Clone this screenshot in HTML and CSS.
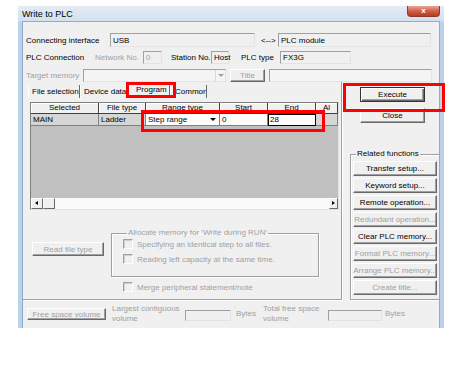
FILE: index.html
```html
<!DOCTYPE html>
<html lang="en">
<head>
    <meta charset="UTF-8">
    <title>Write to PLC</title>
    <link rel="stylesheet" href="styles.css">
</head>
<body>

<div class="window">
    <div class="titlebar">
        <span class="title">Write to PLC</span>
        <span class="close-x">x</span>
    </div>
    <div class="client">
        <div class="row row1">
            <span class="lbl lbl-conn">Connecting interface</span>
            <span class="field f-usb">USB</span>
            <span class="lbl lbl-arrow">&lt;--&gt;</span>
            <span class="field f-module">PLC module</span>
        </div>
        <div class="row row2">
            <span class="lbl lbl-plcconn">PLC Connection</span>
            <span class="lbl dis lbl-net">Network No.</span>
            <span class="field dis f-net">0</span>
            <span class="lbl lbl-station">Station No.</span>
            <span class="field f-host">Host</span>
            <span class="lbl lbl-type">PLC type</span>
            <span class="field f-type">FX3G</span>
        </div>
        <div class="row row3">
            <span class="lbl dis lbl-target">Target memory</span>
            <span class="field combo f-target"><span class="drop dis-drop"></span></span>
            <span class="btn dis btn-title">Title</span>
            <span class="field f-titlebox"></span>
        </div>

        <div class="main">
            <div class="tabpanel">
                <div class="tabs">
                    <span class="tab t-file">File selection</span>
                    <span class="tab t-device">Device data</span>
                    <span class="tab active t-program">Program</span>
                    <span class="tab t-common">Common</span>
                </div>

                <div class="grid">
                    <div class="grid-head">
                        <span>Selected</span>
                        <span>File type</span>
                        <span>Range type</span>
                        <span>Start</span>
                        <span>End</span>
                        <span>Al</span>
                    </div>
                    <div class="grid-row">
                        <span class="cell">MAIN</span>
                        <span class="cell">Ladder</span>
                        <span class="cell edit">Step range<span class="mini-drop"></span></span>
                        <span class="cell edit">0</span>
                        <span class="cell edit focused">28</span>
                        <span class="cell"></span>
                    </div>
                    <div class="grid-body"></div>
                    <div class="hscroll">
                        <span class="sb-btn sb-left"></span>
                        <span class="sb-btn sb-thumb"></span>
                        <span class="sb-track"></span>
                        <span class="sb-btn sb-right"></span>
                    </div>
                </div>

                <div class="lower">
                    <span class="btn dis btn-read">Read file type</span>
                    <fieldset class="group alloc">
                        <legend>Allocate memory for 'Write during RUN'</legend>
                        <label class="check dis"><span class="box"></span>Specifying an identical step to all files.</label>
                        <label class="check dis"><span class="box"></span>Reading left capacity at the same time.</label>
                    </fieldset>
                </div>
                <label class="check dis merge"><span class="box"></span>Merge peripheral statement/note</label>
            </div>

            <div class="side">
                <span class="btn default btn-exec">Execute</span>
                <span class="btn btn-close">Close</span>
                <fieldset class="group related">
                    <legend>Related functions</legend>
                    <span class="btn fn">Transfer setup...</span>
                    <span class="btn fn">Keyword setup...</span>
                    <span class="btn fn">Remote operation...</span>
                    <span class="btn fn dis">Redundant operation...</span>
                    <span class="btn fn">Clear PLC memory...</span>
                    <span class="btn fn dis">Format PLC memory...</span>
                    <span class="btn fn dis">Arrange PLC memory...</span>
                    <span class="btn fn dis">Create title...</span>
                </fieldset>
            </div>
        </div>

        <div class="footer">
            <span class="btn dis btn-free">Free space volume</span>
            <span class="lbl dis lbl-largest">Largest contiguous<br>volume</span>
            <span class="field f-largest"></span>
            <span class="lbl dis lbl-bytes">Bytes</span>
            <span class="lbl dis lbl-total">Total free space<br>volume</span>
            <span class="field f-total"></span>
            <span class="lbl dis">Bytes</span>
        </div>
    </div>
</div>

<!-- red annotation boxes drawn over the dialog -->
<div class="mark mark-tab"></div>
<div class="mark mark-range"></div>
<div class="mark mark-exec"></div>

</body>
</html>
```

FILE: styles.css
```css
* {
    box-sizing: border-box;
}

body {
    margin: 0;
    background-color: #ffffff;
    font-family: 'Liberation Sans', Arial, sans-serif;
    font-size: 8px;
    color: #000;
    position: relative;
}

.window {
    width: 426px;
    height: 322px;
    margin: 6px 0 0 18px;
    display: flex;
    flex-direction: column;
    background: linear-gradient(#e4ecf6, #d2e0f0 15px, #bad2ec 16px, #bad2ec);
}

.titlebar {
    height: 15px;
    display: flex;
    align-items: flex-start;
    padding-left: 4px;
}

.title {
    font-size: 9px;
    line-height: 16px;
}

.close-x {
    margin-left: auto;
    margin-right: 4px;
    width: 33px;
    height: 11px;
    line-height: 10px;
    text-align: center;
    color: #fff;
    font-weight: bold;
    font-size: 8px;
    border: 1px solid #8d3a2e;
    border-top: 0;
    border-radius: 0 0 4px 4px;
    background: linear-gradient(#e9a89a, #d0604a 50%, #b93a22);
}

.client {
    flex: 1;
    margin: 0 4px;
    background-color: #f0f0f0;
    border: 1px solid #92abc7;
    border-bottom: 0;
    overflow: hidden;
}

/* top rows */
.row {
    display: flex;
    align-items: center;
    padding-left: 3px;
    white-space: nowrap;
}

.row1 {
    height: 14px;
    margin-top: 11px;
}

.row2 {
    height: 13px;
    margin-top: 4px;
}

.row3 {
    height: 13px;
    margin-top: 5px;
}

.lbl {
    flex-shrink: 0;
}

.dis {
    color: #a0a0a0;
}

.lbl-conn { width: 84px; }
.lbl-arrow { width: 17px; margin-left: 6px; }
.lbl-plcconn { width: 69px; }
.lbl-net { width: 48px; }
.lbl-station { width: 40px; margin-left: 9px; }
.lbl-type { width: 39px; margin-left: 12px; }
.lbl-target { width: 57px; }

.field {
    height: 100%;
    flex-shrink: 0;
    display: flex;
    align-items: center;
    padding-left: 2px;
    background-color: #f0f0f0;
    border: 1px solid;
    border-color: #a0a0a0 #e3e3e3 #e3e3e3 #a0a0a0;
}

.f-usb { width: 145px; }
.f-module { width: 153px; }
.f-net { width: 19px; }
.f-host { width: 18px; }
.f-type { width: 71px; }
.f-target { width: 143px; background-color: #f4f4f4; }
.f-titlebox { width: 163px; margin-left: 4px; background-color: #f4f4f4; }

.combo {
    justify-content: flex-end;
    padding: 0;
}

.drop {
    width: 10px;
    height: 100%;
    border-left: 1px solid #d8d8d8;
    position: relative;
}

.drop::after {
    content: '';
    position: absolute;
    left: 2px;
    top: 4px;
    border: 3px solid transparent;
    border-top: 3px solid #000;
}

.dis-drop::after {
    border-top-color: #a0a0a0;
}

/* buttons */
.btn {
    display: flex;
    align-items: center;
    justify-content: center;
    flex-shrink: 0;
    white-space: nowrap;
    background-color: #f0f0f0;
    border: 1px solid;
    border-color: #ffffff #696969 #696969 #ffffff;
    box-shadow: inset -1px -1px #a0a0a0;
}

.btn-title {
    width: 35px;
    height: 13px;
    margin-left: 4px;
}

.btn.default {
    border-color: #333 #333 #333 #333;
    box-shadow: inset 1px 1px #fff, inset -1px -1px #696969, inset -2px -2px #a0a0a0;
}

/* tab page */
.main {
    display: flex;
    height: 218px;
}

.tabpanel {
    width: 319px;
    flex-shrink: 0;
    border-right: 1px solid #a0a0a0;
    border-bottom: 1px solid #a0a0a0;
    box-shadow: 1px 1px #fff;
}

.tabs {
    display: flex;
    align-items: flex-end;
    height: 15px;
    margin-top: 1px;
    padding-left: 5px;
}

.tab {
    height: 13px;
    line-height: 13px;
    padding-left: 3px;
    border-left: 1px solid #fff;
    border-right: 1px solid #696969;
    white-space: nowrap;
    overflow: hidden;
}

.t-file { width: 52px; }
.t-device { width: 48px; }
.t-program { width: 42px; padding-left: 7px; }
.t-common { width: 37px; padding-left: 4px; }

.tab.active {
    height: 15px;
    line-height: 11px;
    border-top: 1px solid #fff;
}

.grid {
    width: 309px;
    height: 108px;
    margin: 4px 0 0 7px;
    display: flex;
    flex-direction: column;
    border: 1px solid;
    border-color: #808080 #e3e3e3 #e3e3e3 #808080;
    background-color: #c0c0c0;
}

.grid-head,
.grid-row {
    display: grid;
    grid-template-columns: 68px 47px 74px 48px 48px 1fr;
}

.grid-head {
    height: 11px;
}

.grid-head span {
    text-align: center;
    line-height: 10px;
    background-color: #f0f0f0;
    border-right: 1px solid #404040;
    border-bottom: 1px solid #404040;
    box-shadow: inset 1px 1px #fff;
    overflow: hidden;
    white-space: nowrap;
}

.grid-row {
    height: 12px;
}

.cell {
    position: relative;
    padding-left: 2px;
    line-height: 11px;
    background-color: #d6d6d6;
    border-right: 1px solid #808080;
    border-bottom: 1px solid #808080;
}

.cell.edit {
    background-color: #fff;
}

.cell.focused {
    border: 1px solid #000;
    line-height: 9px;
    padding-left: 1px;
}

.mini-drop {
    position: absolute;
    right: 3px;
    top: 4px;
    border: 3px solid transparent;
    border-top: 3px solid #000;
}

.grid-body {
    flex: 1;
}

.hscroll {
    height: 11px;
    display: flex;
    background-color: #f4f4f4;
}

.sb-btn {
    background-color: #f0f0f0;
    border: 1px solid;
    border-color: #fff #696969 #696969 #fff;
    position: relative;
}

.sb-left,
.sb-right {
    width: 12px;
}

.sb-thumb {
    width: 12px;
}

.sb-track {
    flex: 1;
    background-color: #fafafa;
}

.sb-right {
    width: 9px;
}

.sb-left::after,
.sb-right::after {
    content: '';
    position: absolute;
    top: 2px;
    border: 2.5px solid transparent;
}

.sb-left::after {
    left: 1px;
    border-right: 3px solid #000;
}

.sb-right::after {
    left: 2px;
    border-left: 3px solid #000;
}

.lower {
    display: flex;
    align-items: flex-start;
}

.btn-read {
    width: 72px;
    height: 14px;
    margin: 32px 0 0 9px;
}

.group {
    margin: 0;
    padding: 0;
    border: 1px solid #a0a0a0;
    box-shadow: inset 1px 1px #fff, 1px 1px #fff;
}

.group legend {
    padding: 0 1px;
    margin-left: 4px;
    line-height: 10px;
    white-space: nowrap;
}

.alloc {
    width: 208px;
    height: 49px;
    margin: 18px 0 0 7px;
    padding: 1px 0 0 11px;
    color: #a0a0a0;
}

.check {
    display: flex;
    align-items: center;
    height: 10px;
    margin-bottom: 5px;
    white-space: nowrap;
}

.check .box {
    width: 10px;
    height: 10px;
    margin-right: 4px;
    border: 1px solid;
    border-color: #a0a0a0 #fff #fff #a0a0a0;
    box-shadow: inset 1px 1px #cfcfcf;
    background-color: #f0f0f0;
}

.merge {
    margin: 5px 0 0 100px;
}

/* right column */
.side {
    flex: 1;
    display: flex;
    flex-direction: column;
    align-items: flex-start;
}

.btn-exec,
.btn-close {
    width: 65px;
    height: 15px;
    margin-left: 18px;
}

.btn-exec {
    margin-top: 5px;
}

.btn-close {
    margin-top: 6px;
}

.related {
    width: 92px;
    height: 154px;
    margin: 26px 0 0 8px;
    padding: 2px 0 0 2px;
    display: flex;
    flex-direction: column;
    gap: 2px;
}

.related legend {
    margin-left: 3px;
}

.btn.fn {
    width: 84px;
    height: 15px;
}

/* bottom */
.footer {
    display: flex;
    align-items: center;
    height: 28px;
    padding-left: 4px;
    white-space: nowrap;
}

.footer .lbl {
    line-height: 10px;
}

.btn-free {
    width: 79px;
    height: 12px;
}

.lbl-largest {
    width: 73px;
    margin-left: 6px;
}

.f-largest {
    width: 46px;
    height: 11px;
    margin-top: 3px;
}

.lbl-bytes {
    width: 27px;
    margin-left: 5px;
}

.lbl-total {
    width: 65px;
}

.f-total {
    width: 54px;
    height: 11px;
    margin: 3px 3px 0 0;
}

/* annotation overlays */
.mark {
    position: absolute;
    border: 3px solid #ff0000;
}

.mark-tab {
    left: 126px;
    top: 82px;
    width: 50px;
    height: 16px;
}

.mark-range {
    left: 141px;
    top: 110px;
    width: 184px;
    height: 22px;
}

.mark-exec {
    left: 343px;
    top: 83px;
    width: 102px;
    height: 29px;
}
```
